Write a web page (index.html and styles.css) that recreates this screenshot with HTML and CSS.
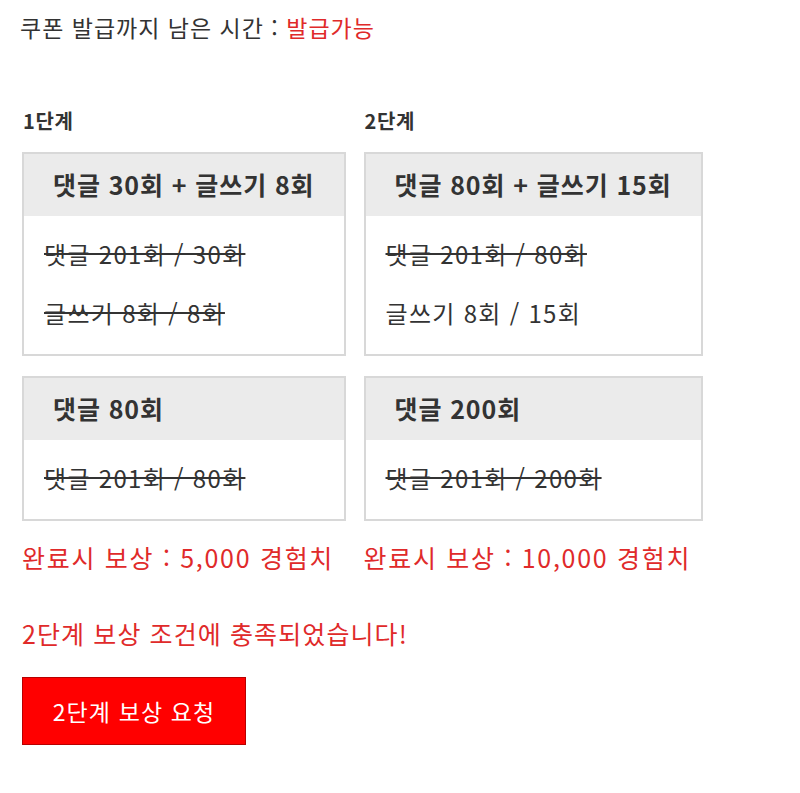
FILE: index.html
```html
<!DOCTYPE html>
<html lang="ko">
<head>
<meta charset="utf-8">
<link rel="stylesheet" href="styles.css">
</head>
<body>
<div class="page">
  <p class="timer">쿠폰 발급까지 남은 시간 : <span class="red">발급가능</span></p>
  <div class="stages">
    <div class="stage">
      <h3 class="stage-label">1단계</h3>
      <div class="box">
        <div class="box-head">댓글 30회 + 글쓰기 8회</div>
        <div class="box-body">
          <div class="row done">댓글 201회 / 30회</div>
          <div class="row done">글쓰기 8회 / 8회</div>
        </div>
      </div>
      <div class="box">
        <div class="box-head">댓글 80회</div>
        <div class="box-body">
          <div class="row done">댓글 201회 / 80회</div>
        </div>
      </div>
      <p class="reward">완료시 보상 : 5,000 경험치</p>
    </div>
    <div class="stage">
      <h3 class="stage-label">2단계</h3>
      <div class="box">
        <div class="box-head">댓글 80회 + 글쓰기 15회</div>
        <div class="box-body">
          <div class="row done">댓글 201회 / 80회</div>
          <div class="row">글쓰기 8회 / 15회</div>
        </div>
      </div>
      <div class="box">
        <div class="box-head">댓글 200회</div>
        <div class="box-body">
          <div class="row done">댓글 201회 / 200회</div>
        </div>
      </div>
      <p class="reward">완료시 보상 : 10,000 경험치</p>
    </div>
  </div>
  <p class="notice">2단계 보상 조건에 충족되었습니다!</p>
  <button class="claim">2단계 보상 요청</button>
</div>
</body>
</html>
```
FILE: styles.css
```css
html, body {
  margin: 0;
  padding: 0;
  background: #fff;
}
body {
  font-family: "Noto Sans CJK KR", "Noto Sans", sans-serif;
  color: #333;
}
.page {
  padding: 0 0 0 20px;
}
.timer {
  margin: 0;
  padding-top: 10px;
  font-size: 23px;
  letter-spacing: 1px;
  line-height: 34px;
}
.red {
  color: #e02a2a;
}
.stages {
  display: flex;
  gap: 18px;
  margin-top: 62px;
  padding-left: 2px;
  align-items: flex-start;
}
.stage {
  display: flex;
  flex-direction: column;
}
.stage-label {
  margin: 0 0 16px 1px;
  font-size: 20px;
  letter-spacing: 0.6px;
  line-height: 30px;
  font-weight: 700;
}
.box {
  border: 2px solid #d8d8d8;
  margin-bottom: 20px;
}
.box-head {
  background: #ebebeb;
  padding: 0 29px;
  height: 62px;
  line-height: 60px;
  font-size: 25px;
  letter-spacing: 0.9px;
  font-weight: 700;
  white-space: nowrap;
}
.box-body {
  padding: 8px 20px 12px;
}
.row {
  font-size: 24px;
  letter-spacing: 1.3px;
  line-height: 59px;
  white-space: nowrap;
}
.row.done {
  text-decoration: line-through;
}
.reward {
  margin: -2px 0 0 0;
  color: #e02a2a;
  font-size: 25px;
  letter-spacing: 1.7px;
  line-height: 36px;
  white-space: nowrap;
}
.notice {
  margin: 40px 0 0 2px;
  color: #e02a2a;
  font-size: 25px;
  letter-spacing: 1.1px;
  line-height: 36px;
}
.claim {
  margin: 26px 0 0 2px;
  width: 224px;
  height: 68px;
  background: #ff0000;
  border: 1px solid #b80000;
  color: #fff;
  font-family: inherit;
  font-size: 23px;
  letter-spacing: 1.1px;
  padding: 0;
}
```
